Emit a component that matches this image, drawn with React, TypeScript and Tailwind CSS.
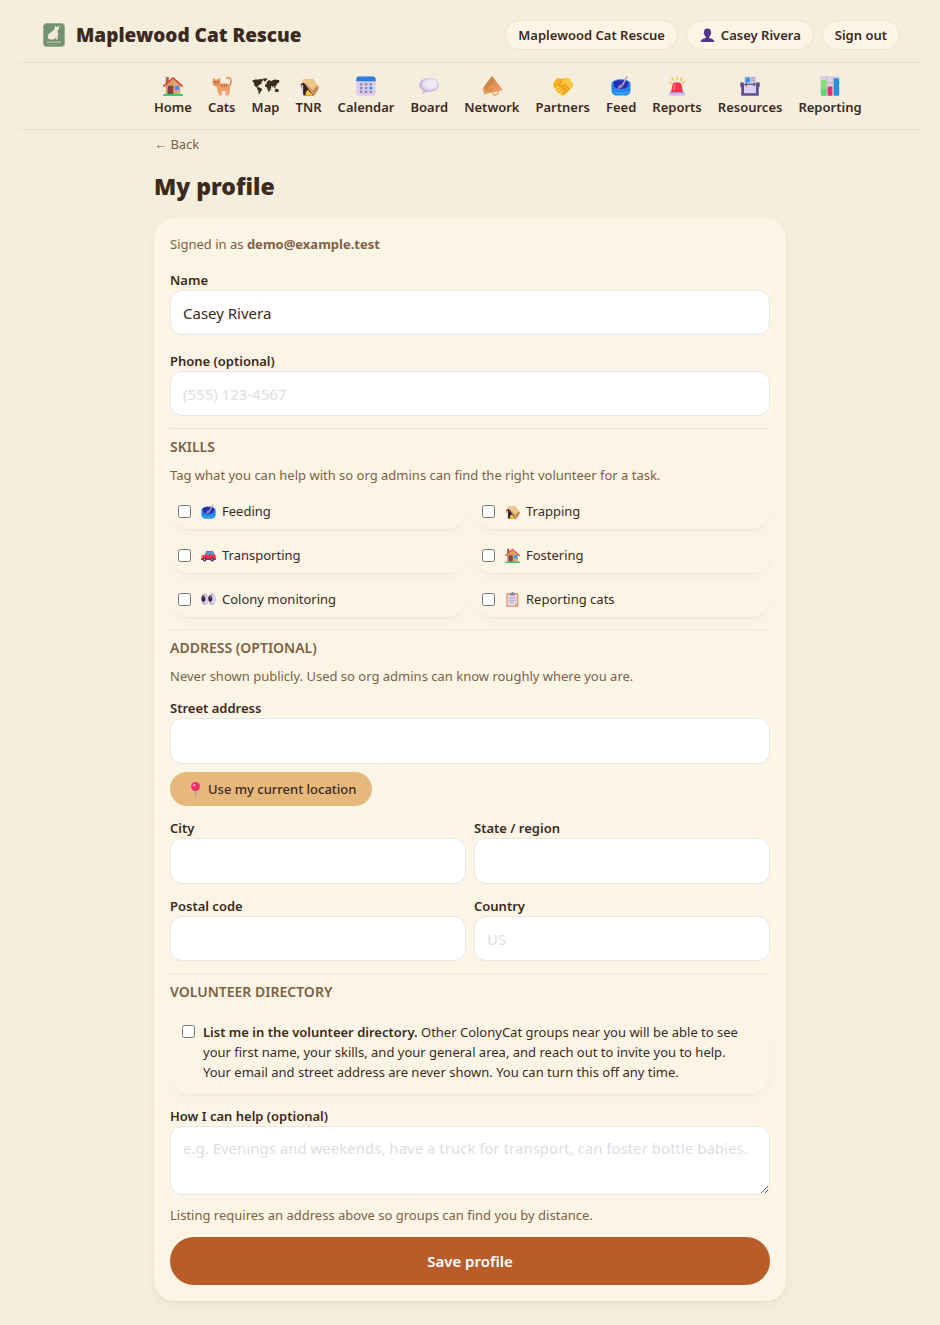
import React, { useState } from "react";
import type { ReactNode } from "react";

type IconProps = { className?: string };

function Svg({ className, children }: IconProps & { children: ReactNode }) {
  return (
    <svg viewBox="0 0 20 20" className={className} aria-hidden="true" fill="none">
      {children}
    </svg>
  );
}

function HouseIcon({ className }: IconProps) {
  return (
    <Svg className={className}>
      <path d="M2.8 1h3v6h-3z" fill="#9b6a4e" />
      <path d="M2.8 9.2 10 3l7.2 6.2V18.4H2.8z" fill="#d9986a" />
      <path d="M10 3l7.2 6.2V18.4H12z" fill="#e0a878" />
      <path d="M4.8 9.8h5.4v8.6H4.8z" fill="#7a4a48" />
      <path d="M12 9.8h4.2v4.2H12z" fill="#2f9bf0" />
      <path d="M.9 10 10 1.8 19.1 10" stroke="#e04a38" strokeWidth="1.7" strokeLinecap="round" strokeLinejoin="round" />
      <rect x="0" y="18" width="20" height="2" rx=".8" fill="#3fc777" />
    </Svg>
  );
}

function CatIcon({ className }: IconProps) {
  return (
    <Svg className={className}>
      <path d="M16.800 11c2-2.200 2.500-4.600 2-7.200-.5-2-2.600-2.800-4-1.600" stroke="#e08d55" strokeWidth="1.500" strokeLinecap="round" />
      <path d="M6 7.500c3 .8 6-.3 9 .3 2.600.5 3.500 2.400 3.100 4.800l-.9 6.700h-2.400l-.5-4.300H9.800l-.6 4.400H6.800L4.500 10z" fill="#eca064" />
      <path d="M8.600 14.300 8 19.500h2.100l.5-4.700zM13 14.800l.2 4.700h2l-.2-4.800z" fill="#f0ada0" />
      <path d="M1 2 3.200 3.400h2.700L8 1.600l.6 4.900c.3 2.500-1.300 4-3.500 4-2.600 0-4.600-1.200-4.600-3.500z" fill="#e9965c" />
      <path d="M9.800 8v3M12.200 7.900V11M14.600 7.900l-.2 2.900" stroke="#b0623a" strokeWidth=".9" strokeLinecap="round" />
      <circle cx="2.700" cy="6" r=".7" fill="#4a2a20" />
      <circle cx="5.700" cy="6" r=".7" fill="#4a2a20" />
      <path d="M3 7.800h2L4 8.700z" fill="#c8506a" />
    </Svg>
  );
}

function MapIcon({ className }: IconProps) {
  return (
    <svg viewBox="0 0 28 20" className={className} aria-hidden="true" fill="#3b2a1e">
      <path d="M.6 4.600 3 3.400l3.200.2 2.500-.7 2.900.6-1 1.800-1.300.3.6 1.400-1.700 1.400-1.500.8-.3 1.200L5 9.700l1 1.500 1.700.3 2.300 1.200-.4 2-1.500 1.500-.6 2-.9-.5-.3-3-1.200-1.700.1-1.200-2-1.300-1-2.200-.6-2L.5 5.700z" />
      <path d="m10.600 2.700 3.200-.5 1.800.7-1.300 1.500-1.700 1.300-.8-1.500z" />
      <path d="m14.300 7.100 1.200-1.900 1.800-1.100 1 .3.300.8 1.600-.7 2.600-1.100 3.600.7 1.500 1-1 .9-.9 1.600-.6-.6-.6 1.700-1.200 1.400-.7 1.800-.7-1.500-.8-.3-.7 1.500-.8-1.600-1.100-.3.700 1.100-.9 2.300-1.100 2.100-1 .8-.9-2.500-.5-1.900-1.500-.5-.7-1.600.8-1.600 1.600-.3z" />
      <path d="m22.700 13.800 1.800-1.100 1.500.3.900 1.700-.6 1.600-1.200-.5-1.800.2zM21.500 11l1.700.6 1.100.7-1.700-.1zM1.300 8.500l1 .3-.5.700zM18.700 13.800l.7-.5-.1 1.500z" />
    </svg>
  );
}

function TrapIcon({ className }: IconProps) {
  return (
    <Svg className={className}>
      <path d="M1.600 9 4.500 4.500 8 6l6.800 13.500H4.500z" fill="#3a1d23" />
      <path d="M4.300 3.500 12.700 3c.5 0 1 .2 1.300.6l5.700 7.600c.3.400.3.900 0 1.300l-3.800 6.500c-.4.600-1 .5-1.400 0L7.500 9.700z" fill="#c98d50" />
      <path d="M.5 9.300 4 3.800c.3-.5.600-.7 1.200-.7L12.700 3c.5 0 1 .2 1.300.6l4.300 5.700-4.700 5.200-6.100-6.800-3.200-1z" fill="#efc68a" />
      <path d="m4.300 5.300 10.500 13.500" stroke="#f8dfb4" strokeWidth=".7" />
      <path d="M3.300 9v10.500" stroke="#e2dcf2" strokeWidth="1.600" />
      <path d="M6.500 19.500c0-3 1.100-5.500 2.500-5.500 1.200 0 1 1.300 2 2.200 1.200.8 2.300 1.500 2.600 3.300z" fill="#ffc530" />
    </Svg>
  );
}

function CalendarIcon({ className }: IconProps) {
  return (
    <Svg className={className}>
      <rect x=".3" y=".5" width="19.400" height="19.300" rx="3" fill="#d9cdef" />
      <path d="M.3 5.200V3.500c0-1.800 1-3 2.900-3h13.600c1.900 0 2.900 1.200 2.900 3v1.700z" fill="#2b7de4" />
      <g fill="#9087ab">
        <path d="M4 7.200h2.500v2.300H4zM8.800 7.200h2.500v2.300H8.800zM13.600 7.200h2.500v2.300h-2.500zM4 11h2.500v2.300H4zM8.800 11h2.500v2.300H8.800zM4 14.800h2.500v2.300H4zM8.800 14.800h2.500v2.300H8.800zM13.600 14.800h2.500v2.300h-2.500z" />
      </g>
      <path d="M13.600 11h2.500v2.300h-2.500z" fill="#2389f0" />
    </Svg>
  );
}

function BubbleIcon({ className }: IconProps) {
  return (
    <Svg className={className}>
      <path d="M10 2c5.700 0 9.800 3 9.800 7s-4.100 7-9.800 7c-1 0-2-.1-2.900-.3-1 1.200-2.800 2-4.600 2.200 1-.9 1.500-2.200 1.400-3.300C1.600 13.300.2 11.500.2 9c0-4 4.100-7 9.800-7z" fill="#cbbae0" />
      <ellipse cx="10.800" cy="8.600" rx="8.300" ry="6" fill="#e2d8ee" />
      <ellipse cx="11.800" cy="8" rx="6.300" ry="4.500" fill="#eee8f4" />
    </Svg>
  );
}

function MegaphoneIcon({ className }: IconProps) {
  return (
    <Svg className={className}>
      <path d="m10.500 16 .7 2.200c.3 1 1.300 1 2.200.6l2-.8c.9-.4 1-1.300.6-2.400" stroke="#eda24a" strokeWidth="1.300" strokeLinecap="round" />
      <path d="M9 1.300c.5-.9 1.500-1 2-.1l8.600 11.300c.7 1 .2 1.900-.9 2L3.800 17.800.8 12.500z" fill="#e59350" />
      <path d="M9 1.300c.5-.9 1.500-1 2-.1l2.600 3.500L2.500 15.500.8 12.500z" fill="#cf8748" />
      <path d="m11 13.500 6.500-4 2.100 3c.7 1 .2 1.900-.9 2l-9 1.400z" fill="#f09470" />
      <path d="m1 12.300 1.500-.8 3.200 6-2.200.8c-.7.200-1.200 0-1.500-.6l-1.300-3.900c-.3-.6-.2-1.100.3-1.500z" fill="#e9a15a" />
    </Svg>
  );
}

function HandshakeIcon({ className }: IconProps) {
  return (
    <Svg className={className}>
      <path d="m.2 7.500 3.700-5.200c2-.3 4 .2 5.700.8 2.100-.8 4.300-1.100 6.500-.6l3.700 5.200c.1 2.600-.9 4.200-2.600 5.400-1.200 2.500-3.700 4.800-6.600 6.200-1 .5-2 .2-2.600-.5-3.200-1.300-4.900-3.400-5.700-5.700C.8 11.800.1 9.800.2 7.500z" fill="#f9b322" />
      <path d="M9.600 3.100c2.100-.8 4.300-1.100 6.500-.6l3.700 5.200c.1 2.600-.9 4.200-2.600 5.400L11.700 8.500 8 10.200C6.600 10.600 6 9 7 7.800z" fill="#fdc93f" />
      <path d="m9.600 3.300-3 5c-.5 1.700 1 2.300 2.200 1.600l2.900-1.500 5 4.700M10.300 11.500l3.500 3.500M8.300 13.500l3.200 3.200" stroke="#dd8414" strokeWidth="1" strokeLinecap="round" />
      <path d="m3 13 2-2M4.800 15.200l2.400-2.400M7 17.200l2-2.100" stroke="#ffd85c" strokeWidth="1.700" strokeLinecap="round" />
      <path d="m2.500 11.500 1.600-1.600M3.900 14.200 6 12M6 16.300l2.200-2.300" stroke="#dd8414" strokeWidth=".7" />
    </Svg>
  );
}

function BowlIcon({ className }: IconProps) {
  return (
    <Svg className={className}>
      <path d="M.5 7.500C1 5 4.800 3.200 10 3.200S19 5 19.500 7.500v6.200c0 3.300-1.800 5.800-5 5.800h-9c-3.200 0-5-2.500-5-5.800z" fill="#2386ee" />
      <path d="M3 15.500c2 2.600 11.500 2.700 14 0" stroke="#3aa5f7" strokeWidth="1.800" />
      <path d="M2.500 6C5.200 3.500 14.800 3.500 17.500 6l-.5 4.300C15.700 12.300 13.200 13 10 13s-5.700-.7-7-2.700z" fill="#2b2bb4" />
      <path d="m15.900.8-4.500 8.500" stroke="#b3acbf" strokeWidth="1.600" strokeLinecap="round" />
      <path d="M7 11.200c.5-2 2.700-3.200 5-2.500.2 2.200-1.800 4-5.400 4.200z" fill="#938ca6" />
    </Svg>
  );
}

function SirenIcon({ className }: IconProps) {
  return (
    <Svg className={className}>
      <path d="M10 .7v3M4.900 1.700l1.400 2.700M15.100 1.700l-1.400 2.700M2.600 6.100l1.900 1M17.400 6.100l-1.900 1" stroke="#f3c44d" strokeWidth="1.300" strokeLinecap="round" />
      <path d="M5.500 8.700C5.800 7 7.200 6.200 10 6.200s4.200.8 4.500 2.500L16.200 17H3.800z" fill="#f6344c" />
      <path d="M8 8.500c-.9 1-1 3.500-1.200 5" stroke="#ff7a6e" strokeWidth="1.500" strokeLinecap="round" />
      <rect x="2" y="16" width="16" height="3.800" rx="1.300" fill="#cdbdec" />
      <path d="M3 16.500h14" stroke="#aa88cf" strokeWidth=".9" />
    </Svg>
  );
}

function ResourcesIcon({ className }: IconProps) {
  return (
    <Svg className={className}>
      <rect x="4.500" y=".5" width="11.500" height="8" rx=".8" fill="#cfc8dc" />
      <path d="M5.500 1.500h4.300v4.700H5.500z" fill="#2c94eb" />
      <path d="M11 2.200h4M11 4.200h4" stroke="#a9a0b6" strokeWidth="1" />
      <path d="M.3 6.500h3.500v2.300h12.400V6.500h3.500v4l-1 1v8H1.300v-8l-1-1z" fill="#5e4a91" />
      <path d="M4 8h12v9.400H4z" fill="#dcd2ed" />
      <path d="M6.200 6.500v4M14 6.500v4M4 8.300h12" stroke="#514968" strokeWidth="1" />
      <path d="M1.300 17.600h17.400v1.900H1.300z" fill="#65519a" />
    </Svg>
  );
}

function ChartIcon({ className }: IconProps) {
  return (
    <Svg className={className}>
      <rect x=".3" y=".3" width="19.400" height="19.400" rx="1" fill="#d9d0e4" />
      <path d="M.3 6.500h19.400M.3 13h19.400M6.800.3v19.400M13.300.3v19.400" stroke="#b8aec8" strokeWidth=".7" />
      <rect x="1.200" y="4" width="5" height="15.700" rx=".8" fill="#83e06c" />
      <rect x="1.200" y="13" width="5" height="6.700" fill="#5fd574" />
      <rect x="7.700" y="10.500" width="4.600" height="9.200" rx=".8" fill="#df2f75" />
      <rect x="13.800" y="2.300" width="5.200" height="17.400" rx=".8" fill="#288edf" />
    </Svg>
  );
}

function CarIcon({ className }: IconProps) {
  return (
    <Svg className={className}>
      <path d="M5 9.500 7 4h8.500l3.500 5.600z" fill="#d93a68" />
      <path d="M6.300 9.600 8.200 4.800h3.300v4.800zM12.500 4.800h2.700l2.500 4.800h-5.200z" fill="#35a8e8" />
      <path d="M.3 12c.2-2 2.600-2.800 6.200-2.900h12.300l.9 1.600v4.800H.3z" fill="#f0304e" />
      <path d="M.3 14h19.400v2H.3z" fill="#b02a5a" />
      <path d="M.6 11.600h2v1.500h-2z" fill="#ffd071" />
      <circle cx="4.800" cy="15.400" r="2.500" fill="#3d2c56" />
      <circle cx="15" cy="15.400" r="2.500" fill="#3d2c56" />
      <circle cx="4.800" cy="15.400" r="1.100" fill="#bfb4d2" />
      <circle cx="15" cy="15.400" r="1.100" fill="#bfb4d2" />
    </Svg>
  );
}

function EyesIcon({ className }: IconProps) {
  return (
    <Svg className={className}>
      <ellipse cx="5.200" cy="9.500" rx="4.900" ry="7.700" fill="#c4afd8" />
      <ellipse cx="14.600" cy="9.500" rx="4.900" ry="7.700" fill="#c4afd8" />
      <ellipse cx="6.500" cy="9.500" rx="3" ry="5.800" fill="#ddd1ea" />
      <ellipse cx="16" cy="9.500" rx="3" ry="5.800" fill="#ddd1ea" />
      <ellipse cx="3.300" cy="8.800" rx="2.600" ry="4.300" fill="#35243f" />
      <ellipse cx="12.400" cy="8.800" rx="2.600" ry="4.300" fill="#35243f" />
      <circle cx="4" cy="7" r=".9" fill="#b9a8ce" />
      <circle cx="13.100" cy="7" r=".9" fill="#b9a8ce" />
    </Svg>
  );
}

function ClipboardIcon({ className }: IconProps) {
  return (
    <Svg className={className}>
      <rect x="1.800" y="1.300" width="16" height="18.400" rx="1.500" fill="#dd9563" />
      <path d="M3.600 3.300H16v12.500l-2.500 2.200H3.600z" fill="#e4dced" />
      <path d="M13.500 18v-2.200H16z" fill="#b09fc3" />
      <path d="M6.500 1.600h1.800c.3-2 3-2 3.300 0h1.900v3.200h-7z" fill="#8b81a3" />
      <path d="M5.800 8h8M5.800 11h8M5.800 14h6" stroke="#a69bb9" strokeWidth="1.200" />
    </Svg>
  );
}

function PersonIcon({ className }: IconProps) {
  return (
    <Svg className={className}>
      <path d="M5.500 6C5 2.700 6.500.7 10 .7S15 2.700 14.500 6c.8.300.6 2-.3 2.500-.4 1.500-1 2.600-2 3.300v1.400c3.800.5 6.500 2 7.200 5.600H.6c.7-3.600 3.400-5.100 7.200-5.600v-1.400c-1-.7-1.600-1.800-2-3.300-.9-.5-1.100-2.200-.3-2.500z" fill="#54358a" />
      <path d="M7.800 13.200c1 1.400 3.400 1.400 4.400 0" stroke="#3d236d" strokeWidth="1" />
    </Svg>
  );
}

function PinIcon({ className }: IconProps) {
  return (
    <Svg className={className}>
      <path d="M9 10h2.200v8.500c0 .9-.5 1.300-1.100 1.300S9 19.400 9 18.500z" fill="#b8a0aa" />
      <circle cx="10" cy="6" r="5.900" fill="#ee2c68" />
      <circle cx="8.300" cy="4.300" r="1.800" fill="#ff94b5" />
    </Svg>
  );
}

function Logo({ className }: IconProps) {
  return (
    <svg viewBox="0 0 28 28" className={className} aria-hidden="true">
      <rect x="3.500" y="2.500" width="21" height="23" rx="3" fill="#73926f" stroke="#9aad8d" />
      <path d="M14.500 7.800 15 4.600l1.700 1.300 2.200-1.100.2 3.300-1.700 1.800c1 2 .8 3.900.3 5.500l-.2 3h-1.600l-.7-2.500-.8 2.500h-3.600c-3.200.2-3.700-2.900-2.100-5.100 1.300-2 3.800-2.700 5.200-4.300z" fill="#efe9d6" />
      <path d="M9.800 14.700c-1.600.5-2 2.300-.7 3.200" stroke="#efe9d6" strokeWidth="1" fill="none" />
      <path d="m20 5.500 1-1 .3 1.500z" fill="#efe9d6" />
      <path d="M7.200 21.200h13.600" stroke="#b9c6ac" strokeWidth="1.500" strokeDasharray="1.300 .5" />
      <path d="M7.500 23.700h13" stroke="#a1b295" strokeWidth=".8" strokeDasharray="1 .4" />
    </svg>
  );
}

const navItems = [
  { label: "Home", Icon: HouseIcon },
  { label: "Cats", Icon: CatIcon },
  { label: "Map", Icon: MapIcon, wide: true },
  { label: "TNR", Icon: TrapIcon },
  { label: "Calendar", Icon: CalendarIcon },
  { label: "Board", Icon: BubbleIcon },
  { label: "Network", Icon: MegaphoneIcon },
  { label: "Partners", Icon: HandshakeIcon },
  { label: "Feed", Icon: BowlIcon },
  { label: "Reports", Icon: SirenIcon },
  { label: "Resources", Icon: ResourcesIcon },
  { label: "Reporting", Icon: ChartIcon },
];

const skills = [
  { label: "Feeding", Icon: BowlIcon },
  { label: "Trapping", Icon: TrapIcon },
  { label: "Transporting", Icon: CarIcon },
  { label: "Fostering", Icon: HouseIcon },
  { label: "Colony monitoring", Icon: EyesIcon },
  { label: "Reporting cats", Icon: ClipboardIcon },
];

const pill =
  "flex h-[30px] items-center gap-1 rounded-full border border-[#ece3d0] bg-[#fcf5e6] px-3 font-semibold whitespace-nowrap";
const control =
  "block w-full rounded-xl border border-gray-200 bg-white px-3 text-[15px] placeholder:text-[#dcdee3]";
const insetCard =
  "rounded-[20px] bg-[#fcf5e6] shadow-[0_1px_1px_rgba(59,42,30,0.04),0_8px_16px_-6px_rgba(59,42,30,0.05)]";

type FieldProps = { id: string; label: string; placeholder?: string; initial?: string; tall?: boolean };

function Field({ id, label, placeholder, initial = "", tall = false }: FieldProps) {
  const [value, setValue] = useState(initial);
  return (
    <div className="min-w-0">
      <label htmlFor={id} className="block font-semibold">
        {label}
      </label>
      <input
        id={id}
        type="text"
        value={value}
        placeholder={placeholder}
        onChange={(e) => setValue(e.target.value)}
        className={`${control} ${tall ? "h-[46px]" : "h-[45px]"}`}
      />
    </div>
  );
}

function Section({ title, children }: { title: string; children: ReactNode }) {
  return (
    <section className="mt-3 border-t border-[#ece4d4] pt-2">
      <h2 className="text-[14px] font-semibold text-[#7d6145] uppercase">{title}</h2>
      {children}
    </section>
  );
}

export default function App() {
  return (
    <div className="min-h-screen bg-[#f5eedd] px-5 pb-6 font-['Noto_Sans','Liberation_Sans',sans-serif] text-[13px] leading-5 text-[#3b2a1e]">
      <header>
        <div className="flex items-center justify-between gap-4 border-b border-[#e9e1cf] px-5 pt-5 pb-3">
          <a href="#home" className="flex items-center gap-2">
            <Logo className="size-7" />
            <span className="text-[19px] font-black whitespace-nowrap">Maplewood Cat Rescue</span>
          </a>
          <div className="flex items-center gap-2">
            <a href="#group" className={pill}>
              Maplewood Cat Rescue
            </a>
            <a href="#profile" className={pill}>
              <span className="flex w-[18px] justify-center">
                <PersonIcon className="size-[15px]" />
              </span>
              Casey Rivera
            </a>
            <button type="button" className={pill}>
              Sign out
            </button>
          </div>
        </div>
        <nav className="border-b border-[#e9e1cf] pt-3 pb-3">
          <div className="mx-auto flex max-w-[632px] gap-4">
            {navItems.map(({ label, Icon, wide }) => (
              <a key={label} href={`#${label.toLowerCase()}`} className="flex flex-col items-center font-semibold">
                <span className="flex h-[22px] items-center justify-center">
                  <Icon className={wide ? "h-5 w-7" : "size-5"} />
                </span>
                {label}
              </a>
            ))}
          </div>
        </nav>
      </header>

      <main className="mx-auto max-w-[632px] pt-1">
        <a href="#back" className="inline-block text-[#7d6145]">
          ← Back
        </a>
        <h1 className="mt-4 text-[23px] leading-8 font-black">My profile</h1>

        <form
          onSubmit={(e) => e.preventDefault()}
          className="mt-4 rounded-[20px] bg-[#fcf5e6] p-4 shadow-[0_1px_2px_rgba(59,42,30,0.07),0_4px_12px_rgba(59,42,30,0.04)]"
        >
          <p className="mb-4 text-[#7d6145]">
            Signed in as <strong className="font-bold">demo@example.test</strong>
          </p>
          <div className="flex flex-col gap-4">
            <Field id="name" label="Name" initial="Casey Rivera" />
            <Field id="phone" label="Phone (optional)" placeholder="(555) 123-4567" />
          </div>

          <Section title="Skills">
            <p className="mt-2 text-[#7d6145]">
              Tag what you can help with so org admins can find the right volunteer for a task.
            </p>
            <div className="mt-2 grid grid-cols-2 gap-2">
              {skills.map(({ label, Icon }) => (
                <label key={label} className={`flex h-9 items-center px-2 ${insetCard}`}>
                  <input type="checkbox" className="size-[13px]" />
                  <Icon className="mr-1.5 ml-2.5 size-[15px]" />
                  {label}
                </label>
              ))}
            </div>
          </Section>

          <Section title="Address (optional)">
            <p className="mt-2 mb-3 text-[#7d6145]">
              Never shown publicly. Used so org admins can know roughly where you are.
            </p>
            <Field id="street" label="Street address" tall />
            <button
              type="button"
              className="mt-2 mb-3 flex h-[34px] items-center gap-1 rounded-full bg-[#e6b87c] px-4 font-medium"
            >
              <span className="flex w-[18px] justify-center">
                <PinIcon className="size-[15px]" />
              </span>
              Use my current location
            </button>
            <div className="grid grid-cols-2 gap-x-2 gap-y-3">
              <Field id="city" label="City" tall />
              <Field id="state" label="State / region" tall />
              <Field id="postal" label="Postal code" />
              <Field id="country" label="Country" placeholder="US" />
            </div>
          </Section>

          <Section title="Volunteer directory">
            <div className={`mt-2 flex items-start gap-2 p-3 ${insetCard}`}>
              <input id="listed" type="checkbox" className="mt-[3px] size-[13px] shrink-0" />
              <label htmlFor="listed" className="pr-4">
                <strong className="font-semibold">List me in the volunteer directory.</strong> Other ColonyCat groups
                near you will be able to see your first name, your skills, and your general area, and reach out to
                invite you to help. Your email and street address are never shown. You can turn this off any time.
              </label>
            </div>
            <label htmlFor="bio" className="mt-3 block font-semibold">
              How I can help (optional)
            </label>
            <textarea
              id="bio"
              placeholder="e.g. Evenings and weekends, have a truck for transport, can foster bottle babies."
              className={`${control} h-[69px] resize-y py-[11px]`}
            />
            <p className="mt-2.5 text-[#7d6145]">
              Listing requires an address above so groups can find you by distance.
            </p>
          </Section>

          <button
            type="submit"
            className="mt-3 h-12 w-full rounded-full bg-[#b85c2a] text-[15px] font-semibold text-white"
          >
            Save profile
          </button>
        </form>
      </main>
    </div>
  );
}
